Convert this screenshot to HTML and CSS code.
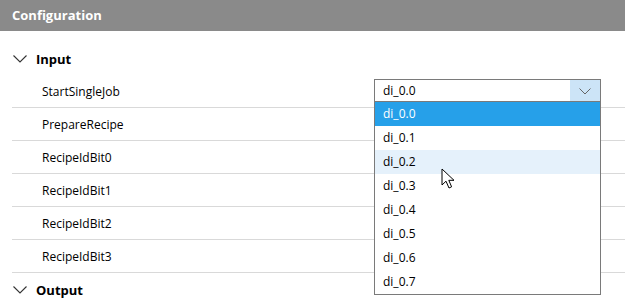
FILE: index.html
```html
<!DOCTYPE html>
<html lang="en">
  <head>
    <meta charset="UTF-8" />
    <title>Configuration</title>
    <link rel="stylesheet" href="styles.css">
  </head>
  <body>
    <header class="panelHeader">Configuration</header>

    <section class="group">
      <div class="groupTitle">
        <svg class="chevron" width="14" height="8" viewBox="0 0 14 8"><path d="M0.5 0.5 L7 7 L13.5 0.5" fill="none" stroke="#333" stroke-width="1.1"/></svg>
        <span>Input</span>
      </div>
      <div class="rows">
        <div class="row">
          <span class="rowLabel">StartSingleJob</span>
          <div class="selectWrap">
            <div class="selectBox">
              <span class="selectValue">di_0.0</span>
              <span class="selectArrow">
                <svg width="12" height="7" viewBox="0 0 12 7"><path d="M0.5 0.5 L6 6 L11.5 0.5" fill="none" stroke="#666" stroke-width="1"/></svg>
              </span>
            </div>
            <ul class="optionList">
              <li class="option selected">di_0.0</li>
              <li class="option">di_0.1</li>
              <li class="option hovered">di_0.2</li>
              <li class="option">di_0.3</li>
              <li class="option">di_0.4</li>
              <li class="option">di_0.5</li>
              <li class="option">di_0.6</li>
              <li class="option">di_0.7</li>
            </ul>
            <svg class="pointer" width="16" height="22" viewBox="0 0 16 22">
              <path d="M1 1 L1 17 L5 13.2 L8 20 L10.6 18.8 L7.8 12.3 L13 12.3 Z" fill="#fff" stroke="#000" stroke-width="1" stroke-linejoin="round"/>
            </svg>
          </div>
        </div>
        <div class="row"><span class="rowLabel">PrepareRecipe</span></div>
        <div class="row"><span class="rowLabel">RecipeIdBit0</span></div>
        <div class="row"><span class="rowLabel">RecipeIdBit1</span></div>
        <div class="row"><span class="rowLabel">RecipeIdBit2</span></div>
        <div class="row"><span class="rowLabel">RecipeIdBit3</span></div>
      </div>
    </section>

    <section class="group">
      <div class="groupTitle">
        <svg class="chevron" width="14" height="8" viewBox="0 0 14 8"><path d="M0.5 0.5 L7 7 L13.5 0.5" fill="none" stroke="#333" stroke-width="1.1"/></svg>
        <span>Output</span>
      </div>
    </section>
  </body>
</html>
```

FILE: styles.css
```css
/* Dasar halaman */
body {
  margin: 0;
  background-color: #fff;
  font-family: "Open Sans", "Noto Sans", sans-serif;
  font-size: 12px;
  color: #000;
  overflow: hidden;
}

/* Header panel */
.panelHeader {
  height: 31px;
  line-height: 31px;
  padding-left: 12px;
  background-color: #8a8a8a;
  color: #fff;
  font-weight: 700;
  font-size: 13px;
}

/* Grup Input / Output */
.group {
  padding-left: 12px;
}

.groupTitle {
  display: flex;
  align-items: center;
  height: 33px;
  margin-top: 11px;
  font-weight: 700;
  font-size: 13px;
}

.group + .group .groupTitle {
  margin-top: 0;
}

.chevron {
  margin-left: 1px;
  margin-right: 9px;
}

/* Baris parameter */
.row {
  display: flex;
  align-items: center;
  height: 32px;
  border-bottom: 1px solid #d9d9d9;
  position: relative;
}

.rowLabel {
  padding-left: 30px;
  width: 332px;
}

/* Dropdown */
.selectWrap {
  position: absolute;
  left: 362px;
  top: 4px;
  width: 227px;
  z-index: 5;
}

.selectBox {
  display: flex;
  height: 21px;
  border: 1px solid #7a7a7a;
  background-color: #fff;
}

.selectValue {
  flex: 1;
  line-height: 21px;
  padding-left: 8px;
}

.selectArrow {
  width: 30px;
  display: flex;
  align-items: center;
  justify-content: center;
  padding-top: 1px;
  background-color: #cce4f7;
}

.optionList {
  list-style: none;
  margin: 0;
  padding: 0;
  border: 1px solid #7a7a7a;
  border-top: none;
  background-color: #fff;
}

.option {
  height: 24px;
  line-height: 24px;
  padding-left: 8px;
}

.option.selected {
  background-color: #26a0e9;
  color: #fff;
}

.option.hovered {
  background-color: #e5f1fb;
}

.pointer {
  position: absolute;
  left: 67px;
  top: 89px;
}
```
